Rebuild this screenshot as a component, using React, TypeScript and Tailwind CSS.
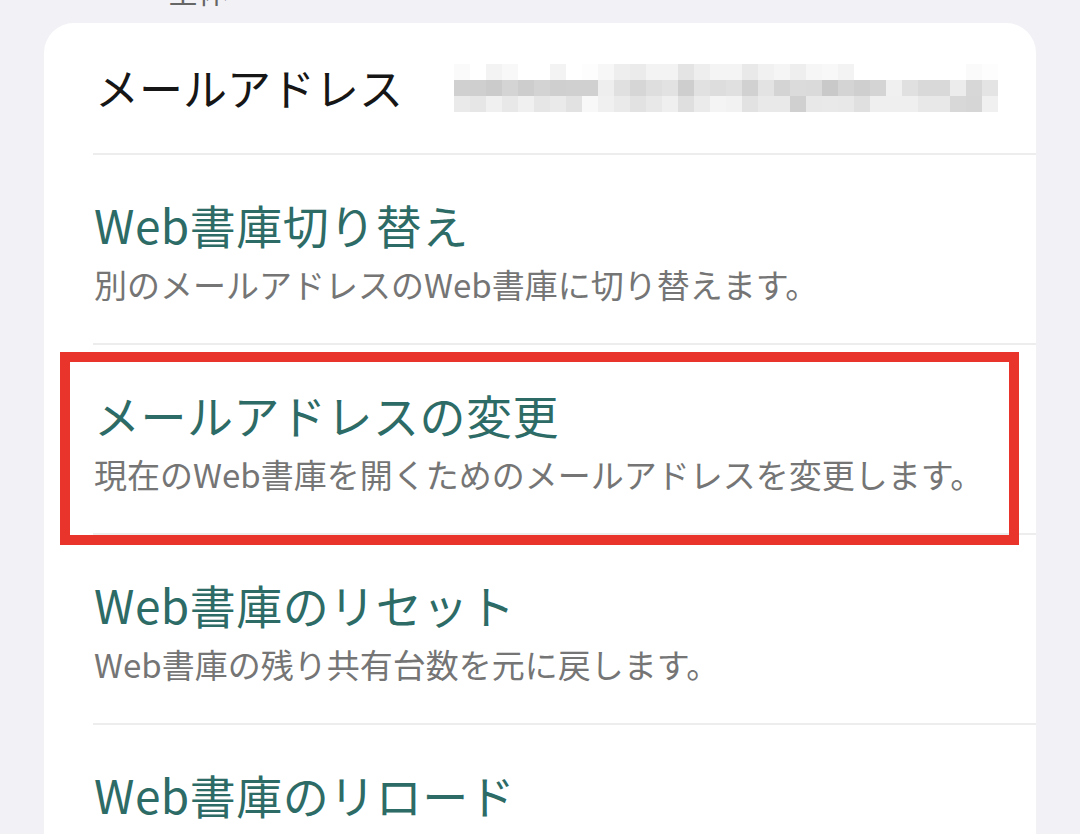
import React from "react"

const font = { fontFamily: '"Noto Sans CJK JP", "Noto Sans", sans-serif' }

// pixelated email address (mosaic), gray levels per 16px block
const mosaic = [
  ["fa", "ff", "f3", "f8", "ff", "ff", "f3", "ff", "fd", "f7", "ee", "eb", "f3", "f3", "e4", "ee", "f4", "f4", "e9", "f1", "f5", "ee", "f6", "f8", "f3", "ff", "ff", "ff", "ff", "ff", "ff", "ff", "fa", "fd"],
  ["d0", "cf", "cb", "d4", "cd", "d3", "cf", "d0", "d0", "ee", "e0", "d6", "de", "e2", "ce", "e1", "dd", "e0", "d1", "e3", "d4", "db", "da", "c9", "d4", "cf", "d4", "f0", "e0", "d9", "d9", "ec", "d7", "e4"],
  ["ea", "e6", "f0", "e8", "f0", "e6", "ea", "e2", "f8", "f0", "ea", "e2", "e8", "ef", "df", "eb", "f4", "f2", "e2", "e9", "e9", "d0", "e8", "e9", "e8", "e0", "ef", "ef", "ef", "e8", "e8", "d8", "d6", "f0"],
]

const items = [
  { title: "Web書庫切り替え", desc: "別のメールアドレスのWeb書庫に切り替えます。" },
  { title: "メールアドレスの変更", desc: "現在のWeb書庫を開くためのメールアドレスを変更します。", marked: true },
  { title: "Web書庫のリセット", desc: "Web書庫の残り共有台数を元に戻します。" },
  { title: "Web書庫のリロード", desc: "" },
]

const Mosaic = () => (
  <div className="flex flex-col">
    {mosaic.map((row, i) => (
      <div key={i} className="flex">
        {row.map((c, j) => (
          <div key={j} className="w-[16px] h-[16px]" style={{ backgroundColor: `#${c}${c}${c}` }} />
        ))}
      </div>
    ))}
  </div>
)

const SettingRow = ({ title, desc, marked }: { title: string, desc: string, marked?: boolean }) => {
  return (
    <div className="relative pt-[41px] pb-[39px] border-b-2 border-[#ededed]">
      <div className="text-[46px] leading-[56px] tracking-[0.5px] text-[#2d6b66] pl-[1px]">{title}</div>
      <div className="mt-[12px] text-[33px] leading-[40px] text-[#757575] pl-[1px]">{desc}</div>
      {marked && (
        <div className="absolute top-[7px] left-[-33px] w-[959px] h-[193px] border-[10px] border-[#e8342a]" />
      )}
    </div>
  )
}

export default function App() {
  return (
    <div className="w-[1080px] h-[834px] overflow-hidden bg-[#f2f1f6]" style={font}>
      {/* section header, scrolled mostly off screen */}
      <div className="-mt-[28px] mb-[15px] h-[36px] pl-[168px] text-[30px] leading-[36px] text-[#666666]">全体</div>

      <div className="mx-[44px] bg-white rounded-[30px] pl-[49px]">
        {/* email */}
        <div className="h-[132px] flex items-center border-b-2 border-[#ededed]">
          <div className="w-[361px] text-[44px] leading-[52px] text-[#161616] pl-[2px] -mt-[2px]">メールアドレス</div>
          <Mosaic />
        </div>

        {items.map((item) => (
          <SettingRow key={item.title} title={item.title} desc={item.desc} marked={item.marked} />
        ))}
      </div>
    </div>
  )
}
